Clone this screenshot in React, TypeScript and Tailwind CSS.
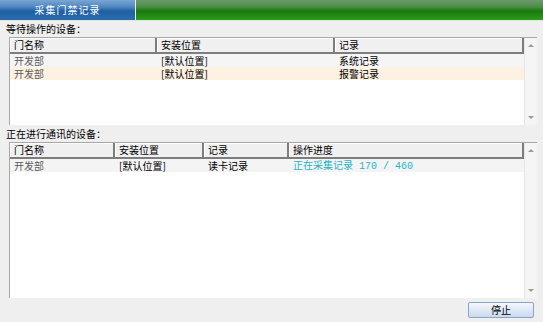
import React from "react";

const font = { fontFamily: '"Noto Sans CJK SC", "Noto Sans", sans-serif' };

function HeaderCell({ w, children, last }: { w?: string; children: React.ReactNode; last?: boolean }) {
  return (
    <div
      className={`${w ?? ""} ${last ? "flex-1" : ""} h-full flex items-center pl-[4px] bg-[#f0f0f0] border-r-2 border-b-2 border-r-[#7d7d7d] border-b-[#7d7d7d] shadow-[inset_1px_1px_0_#ffffff] text-black`}
    >
      {children}
    </div>
  );
}

function Scrollbar() {
  return (
    <div className="w-[13px] h-full bg-[#f5f5f5] border-l border-[#e6e6e6] flex flex-col items-center justify-between py-[6px]">
      <div className="w-0 h-0 border-l-[3px] border-r-[3px] border-b-[3px] border-l-transparent border-r-transparent border-b-[#9a9a9a]" />
      <div className="w-0 h-0 border-l-[3px] border-r-[3px] border-t-[3px] border-l-transparent border-r-transparent border-t-[#9a9a9a]" />
    </div>
  );
}

export default function App() {
  const rows1 = [
    { name: "开发部", loc: "[默认位置]", rec: "系统记录", bg: "bg-[#f5f5f5]" },
    { name: "开发部", loc: "[默认位置]", rec: "报警记录", bg: "bg-[#fdf1e2]" },
  ];
  return (
    <div className="w-[543px] h-[322px] bg-[#efefef] flex flex-col text-[10px] leading-none overflow-hidden" style={font}>
      {/* top bar */}
      <div className="h-[20px] flex shrink-0">
        <div className="w-[135px] h-full bg-[linear-gradient(to_bottom,#7aa6d4_0%,#4f86c0_35%,#1f60a2_55%,#2a6cae_100%)] flex items-center justify-center text-white text-[10px] tracking-[1px]">
          采集门禁记录
        </div>
        <div className="w-[1px] h-full bg-[#e8eef0]" />
        <div className="flex-1 h-full bg-[linear-gradient(to_bottom,#6a9a6a_0%,#4d8c48_35%,#167a0a_55%,#2e9c1c_100%)]" />
      </div>
      <div className="h-[1px] bg-[#dde8dd] shrink-0" />

      {/* label 1 */}
      <div className="h-[16px] flex items-center pl-[6px] text-black shrink-0">等待操作的设备：</div>

      {/* list 1 */}
      <div className="ml-[9px] w-[528px] h-[88px] flex border-l border-t border-[#a8a8a8] bg-white shrink-0">
        <div className="flex-1 flex flex-col">
          <div className="h-[16px] flex shrink-0">
            <HeaderCell w="w-[147px]">门名称</HeaderCell>
            <HeaderCell w="w-[178px]">安装位置</HeaderCell>
            <HeaderCell last>记录</HeaderCell>
          </div>
          {rows1.map((r, i) => (
            <div key={i} className={`h-[13px] flex items-center ${r.bg}`}>
              <div className="w-[147px] pl-[4px] text-[#5a5a5a]">{r.name}</div>
              <div className="w-[178px] pl-[4px] text-black">{r.loc}</div>
              <div className="flex-1 pl-[4px] text-black">{r.rec}</div>
            </div>
          ))}
        </div>
        <Scrollbar />
      </div>

      {/* label 2 */}
      <div className="h-[17px] flex items-center pl-[6px] pt-[1px] text-black shrink-0">正在进行通讯的设备：</div>

      {/* list 2 */}
      <div className="ml-[9px] w-[528px] h-[156px] flex border-l border-t border-[#a8a8a8] bg-white shrink-0">
        <div className="flex-1 flex flex-col">
          <div className="h-[16px] flex shrink-0">
            <HeaderCell w="w-[105px]">门名称</HeaderCell>
            <HeaderCell w="w-[89px]">安装位置</HeaderCell>
            <HeaderCell w="w-[85px]">记录</HeaderCell>
            <HeaderCell last>操作进度</HeaderCell>
          </div>
          <div className="h-[13px] flex items-center bg-[#f4f4f4]">
            <div className="w-[105px] pl-[4px] text-[#5a5a5a]">开发部</div>
            <div className="w-[89px] pl-[4px] text-black">[默认位置]</div>
            <div className="w-[85px] pl-[4px] text-black">读卡记录</div>
            <div className="flex-1 pl-[4px] text-[#1fb5c6]">
              正在采集记录<span className="font-['Liberation_Mono',monospace]"> 170 / 460</span>
            </div>
          </div>
        </div>
        <Scrollbar />
      </div>

      {/* bottom */}
      <div className="flex-1 flex items-start justify-end pr-[9px] pt-[4px]">
        <button className="w-[66px] h-[16px] rounded-[2px] border border-[#8aa2c4] bg-[linear-gradient(to_bottom,#f4f8fd_0%,#dfe9f6_50%,#c9daf0_100%)] flex items-center justify-center text-black text-[10px]">
          停止
        </button>
      </div>
    </div>
  );
}
